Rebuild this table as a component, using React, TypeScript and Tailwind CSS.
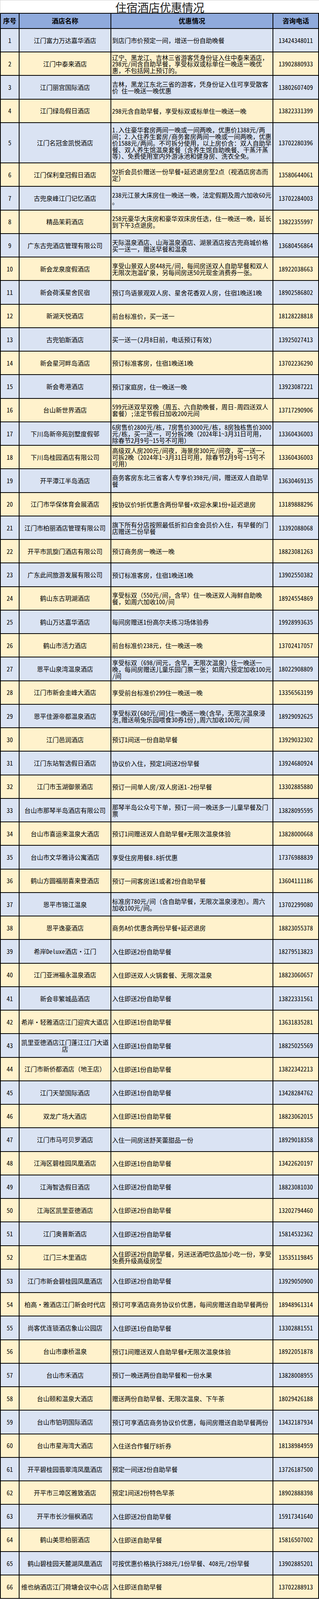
import React from 'react';

// [名称, 优惠情况, 电话] — "\n" marks the line breaks of the original sheet
const hotels: [string, string, string][] = [
  ['江门富力万达嘉华酒店', '到店门市价预定一间，增送一份自助晚餐', '13424348011'],
  ['江门中泰来酒店', '辽宁、黑龙江、吉林三省游客凭身份证入住中泰来酒店，\n298元/间含自助早餐，享受标双或标单住一晚送一晚优\n惠，不包括网上预订的。', '13902880933'],
  ['江门丽宫国际酒店', '吉林，黑龙江东北三省的游客，凭身份证入住可享受散客\n价 住一晚送一晚优惠', '13802607409'],
  ['江门绿岛假日酒店', '298元含自助早餐，享受标双或标单住一晚送一晚', '13822331399'],
  ['江门名冠金凯悦酒店', '1.入住豪华套房两间一晚或一间两晚，优惠价1388元/两\n间；2.入住养生套房/商务套房两间一晚或一间两晚，优惠\n价1588元/两间。不可拆分使用，以上房价含：双人自助早\n餐、双人养生馆温泉套餐（含养生馆自助晚餐、干蒸汗蒸\n等）、免费使用室内外游泳池和健身房、洗衣全免。', '13702280396'],
  ['江门保利皇冠假日酒店', '92折会员价赠送一份早餐+延迟退房至2点（视酒店房态而\n定）', '13580644061'],
  ['古兜泉峰江门记忆酒店', '238元江景大床房住一晚送一晚，法定假期及周六加收60元\n。', '13702284003'],
  ['精品茉莉酒店', '258元豪华大床房和豪华双床房任选，住一晚送一晚，延长\n到下午3点退房。', '13822355997'],
  ['广东古兜酒店管理有限公司', '天际温泉酒店、山海温泉酒店、湖景酒店按古兜商城价格\n买一送一，赠送早餐和温泉', '13680456864'],
  ['新会龙泉度假酒店', '享受山景双人房448元/间，每间房送双人自助早餐和双人\n无限次泡温矿泉，另每间房送50元现金消费券一张。', '18922038663'],
  ['新会荷溪星舍民宿', '预订鸟语景观双人房、星舍花香双人房，住宿1晚送1晚', '18902586802'],
  ['新湖天悦酒店', '前台标准价，买一送一', '18128228818'],
  ['古兜铂斯酒店', '买一送一(2月8日前，电话预订有效)', '13925027413'],
  ['新会星河畔岛酒店', '预订标准客房，住宿1晚送1晚', '13702236290'],
  ['新会粤港酒店', '预订家庭房，住一晚送一晚', '13923087221'],
  ['台山新世界酒店', '599元送双早双晚（周五、六自助晚餐，周日-周四送双人\n套餐）;法定节假日加收200元间', '13717290906'],
  ['下川岛新帝苑别墅度假邨', '6房售价2800元/栋，7房售价3000元/栋，8房独栋售价3000\n元/栋，买一送一，可分拆2晚（2024年1~3月31日可用，\n除春节2月9号~15号不可用）', '13360436003'],
  ['下川岛桂园酒店有限公司', '高级双人房200元/间夜，海景房300元/间夜，买一送一，\n可拆2晚（2024年1~3月31日可用，除春节2月9号~15号不\n可用）', '13360436003'],
  ['开平潭江半岛酒店', '商务客房东北三省客人专享价398元/间，赠送双人自助早\n餐', '13630469135'],
  ['江门市华保体育会展酒店', '按协议价9折优惠含两份早餐+欢迎水果1份+延迟退房', '13189888296'],
  ['江门市柏丽酒店管理有限公司', '旗下所有分店按照最低折扣白金会员价入住，有早餐的门\n店赠送二份早餐', '13392088068'],
  ['开平市凯旋门酒店有限公司', '预订商务房一晚送一晚', '18823081263'],
  ['广东此间旅游发展有限公司', '预订标准客房，住宿1晚送1晚', '13902550382'],
  ['鹤山东古玥湖酒店', '享受标双（550元/间，含早）住一晚送双人海鲜自助晚\n餐，如周六加收100/间', '18924554869'],
  ['鹤山万达嘉华酒店', '每间房赠送1份高尔夫练习场体验券', '19928993635'],
  ['鹤山市活力酒店', '前台标准价238元，住一晚送一晚', '13702417057'],
  ['恩平山泉湾温泉酒店', '享受标双（698/间元，含早，无限次温泉）住一晚送一\n晚，每间房赠送儿童乐园门票一张；如周六预定加收100元\n/间', '18022908809'],
  ['江门市新会圭峰大酒店', '享受前台标准价299住一晚送一晚', '13356563199'],
  ['恩平佳源帝都温泉酒店', '享受标双(680元/间)住一晚送一晚(含早，无限次温泉浸\n泡,赠送萌兔乐园喂食30券1份),周六加收100元/间', '18929092625'],
  ['江门邑润酒店', '预订1间送一份自助早餐', '13929032302'],
  ['江门东站智选假日酒店', '协议价入住，预定1间送2份早餐', '13924680924'],
  ['江门市玉湖御景酒店', '预订一间单人房/双人房送1-2份早餐', '13302885880'],
  ['台山市那琴半岛酒店有限公司', '那琴半岛公众号下单，预订一间一晚送多一儿童早餐及门\n票', '13828095595'],
  ['台山市喜运来温泉大酒店', '预订1间赠送双人自助早餐#无限次温泉体验', '13828000668'],
  ['台山市文华雅诗公寓酒店', '享受住房用餐8.8折优惠', '17376988839'],
  ['鹤山方圆福朋喜来登酒店', '预订一间客房送1或者2份自助早餐', '13604111186'],
  ['恩平市锦江温泉', '标准房780元/间（含自助早餐，无限次温泉浸泡）。周六\n加收100元/间。', '13702299080'],
  ['恩平逸豪酒店', '商务A价优惠含两份早餐+延迟退房', '18823055378'],
  ['希岸Deluxe酒店·江门', '入住即送2份自助早餐', '18279513823'],
  ['江门亚洲福永温泉酒店', '入住即送双人火锅套餐、无限次温泉', '18823060657'],
  ['新会非繁城品酒店', '入住即送2份自助早餐', '13822331561'],
  ['希岸·轻雅酒店江门迎宾大道店', '入住即送1份自助早餐', '13631835281'],
  ['凯里亚德酒店江门蓬江江门大道\n店', '入住即送1份自助早餐', '18825025569'],
  ['江门市新侨都酒店（地王店）', '入住即送1份自助早餐', '13822342213'],
  ['江门天堃国际酒店', '入住即送1份自助早餐', '13428284762'],
  ['双龙广场大酒店', '入住即送1份自助早餐', '18823062015'],
  ['江门市马可贝罗酒店', '入住一间房送舒芙蕾甜品一份', '18929018358'],
  ['江海区碧桂园凤凰酒店', '入住即送1份自助早餐', '13422620197'],
  ['江海智选假日酒店', '入住即送2份自助早餐', '18823081030'],
  ['江海区凯里亚德酒店', '入住即送2份自助早餐', '13202794460'],
  ['江门奥普斯酒店', '入住即送2份自助早餐', '15814532362'],
  ['江门三木里酒店', '入住即送2份自助早餐，另送送酒吧饮品加小吃一份，享受\n免费升级高级房型', '13535119845'],
  ['江门市新会碧桂园凤凰酒店', '入住即送2份自助早餐', '13929050900'],
  ['柏高·雅酒店江门新会时代店', '预订可享酒店商务协议价优惠，每间房赠送自助早餐两份', '18948961314'],
  ['尚客优连锁酒店象山公园店', '入住即送1份自助早餐', '13302881551'],
  ['台山市康桥温泉', '预订1间赠送双人自助早餐#无限次温泉体验', '18922051878'],
  ['台山市禾酒店', '预订一晚送两份自助早餐和一份水果', '13828008955'],
  ['台山颐和温泉大酒店', '赠送两份自助早餐、无限次温泉、下午茶', '18029426188'],
  ['台山市铂玥国际酒店', '预订可享酒店商务协议价优惠，每间房赠送自助早餐两份', '13432187934'],
  ['台山市星海湾大酒店', '入住送合作餐厅8折券', '18138984959'],
  ['开平碧桂园翡翠湾凤凰酒店', '预定一间送2份自助早餐', '13726187500'],
  ['开平市三埠区雅致酒店', '预定1间送2份特色早茶', '18902888398'],
  ['开平市长沙俪枫酒店', '入住即送2份自助早餐', '15917341640'],
  ['鹤山美思柏丽酒店', '入住即送自助早餐', '15816507002'],
  ['鹤山碧桂园天麓湖凤凰酒店', '可按优惠价格执行388元/1份早餐、408元/2份早餐', '13902885201'],
  ['维也纳酒店江门荷塘会议中心店', '入住即送自助早餐', '13702288913'],
];

const cell = 'border-b-2 border-r-2 border-black';

function HotelRow({ no, name, desc, phone }: { no: number; name: string; desc: string; phone: string }) {
  const bg = no % 2 === 1 ? 'bg-[#dae3f3]' : 'bg-[#fff2cc]';
  const height = no === 5 ? 'h-[103.2px]' : 'h-[60.26px]';
  return (
    <div className={`grid grid-cols-[50px_235px_415px_117px] ${height} ${bg}`}>
      <div className={`${cell} border-l-2 flex items-center justify-center`}>{no}</div>
      <div className={`${cell} flex flex-col items-center justify-center text-center`}>
        {name.split('\n').map((line, i) => (
          <div key={i} className="whitespace-nowrap">{line}</div>
        ))}
      </div>
      <div className={`${cell} flex flex-col justify-center pl-[2px] pt-[1px]`}>
        {desc.split('\n').map((line, i) => (
          <div key={i} className="whitespace-pre">{line}</div>
        ))}
      </div>
      <div className={`${cell} flex items-center justify-center`}>{phone}</div>
    </div>
  );
}

export default function App() {
  return (
    <div className="w-[817px] bg-white text-black text-[16px] leading-[16.9px] font-['Noto_Sans_Mono_CJK_SC','Noto_Sans_CJK_SC',sans-serif]">
      <div className="h-[34.7px] border-b-2 border-black border-t border-t-[#d0d0d0] border-l border-l-[#d0d0d0] flex items-center justify-center pt-[4px]">
        <h1 className="text-[29px] leading-none tracking-[-0.5px] text-[#222] font-['Noto_Sans_CJK_SC',sans-serif]">住宿酒店优惠情况</h1>
      </div>

      <div className="grid grid-cols-[50px_235px_415px_117px] h-[39.3px] bg-[#8faadc] text-[17px] font-bold">
        <div className={`${cell} border-l-2 flex items-center justify-center`}>序号</div>
        <div className={`${cell} flex items-center justify-center`}>酒店名称</div>
        <div className={`${cell} flex items-center justify-center`}>优惠情况</div>
        <div className={`${cell} flex items-center justify-center`}>咨询电话</div>
      </div>

      {hotels.map(([name, desc, phone], i) => (
        <HotelRow key={i} no={i + 1} name={name} desc={desc} phone={phone} />
      ))}
    </div>
  );
}
